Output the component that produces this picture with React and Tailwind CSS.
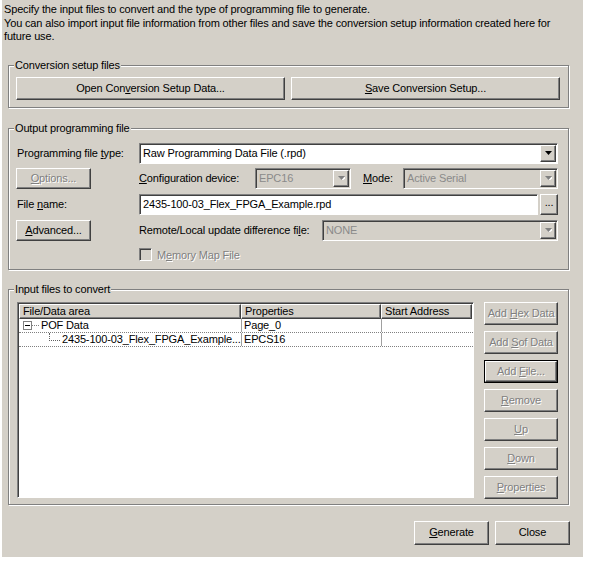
import React from 'react';

const raised =
  'border border-t-white border-l-white border-r-[#404040] border-b-[#404040] shadow-[inset_-1px_-1px_0_#808080] bg-[#d4d0c8]';
const sunken =
  'border border-t-[#808080] border-l-[#808080] border-r-white border-b-white shadow-[inset_1px_1px_0_#404040]';
const grayText = 'text-[#808080] [text-shadow:1px_1px_0_#fff]';

const Btn = ({ children, disabled, className = '' }) => (
  <div className={`${raised} flex items-center justify-center whitespace-nowrap ${disabled ? grayText : 'text-black'} ${className}`}>
    {children}
  </div>
);

const Arrow = ({ disabled }) => (
  <div className={`${raised} w-[16px] h-[17px] mr-[1px] flex items-center justify-center shrink-0`}>
    <svg width="7" height="4" viewBox="0 0 7 4">
      {disabled && <path d="M1 1h7l-3.5 4z" fill="#fff" />}
      <path d="M0 0h7l-3.5 4z" fill={disabled ? '#808080' : '#000'} />
    </svg>
  </div>
);

const Select = ({ value, disabled, className = '' }) => (
  <div className={`${sunken} h-[21px] flex items-center ${disabled ? 'bg-[#d4d0c8] text-[#8a8a8a]' : 'bg-white'} ${className}`}>
    <span className="flex-1 pl-[3px] truncate">{value}</span>
    <Arrow disabled={disabled} />
  </div>
);

const Group = ({ title, className = '', children }) => (
  <div className={`relative ml-[6px] w-[561px] border border-[#808080] shadow-[inset_1px_1px_0_#fff,1px_1px_0_#fff] ${className}`}>
    <span className="absolute -top-[8px] left-[5px] bg-[#d4d0c8] px-[1px] leading-[14px]">{title}</span>
    {children}
  </div>
);

const rightButtons = [
  ['Add ', 'H', 'ex Data'],
  ['Add ', 'S', 'of Data'],
  ['Add ', 'F', 'ile...'],
  ['', 'R', 'emove'],
  ['', 'U', 'p'],
  ['', 'D', 'own'],
  ['', 'P', 'roperties'],
];

export default function App() {
  return (
    <div className="w-[590px] h-[565px] bg-white font-['Liberation_Sans',Arial,sans-serif] text-[11px] tracking-[-0.15px] text-black">
      <div className="w-[581px] h-[557px] ml-[2px] bg-[#d4d0c8] pt-[3px]">
        <div className="pl-[2px] leading-[13.5px]">
          <p>Specify the input files to convert and the type of programming file to generate.</p>
          <p>You can also import input file information from other files and save the conversion setup information created here for</p>
          <p>future use.</p>
        </div>

        <Group title="Conversion setup files" className="mt-[21px] h-[43px] pt-[11px] pl-[7px]">
          <div className="flex gap-[6px]">
            <Btn className="w-[269px] h-[23px]">
              <span>Open Con<u>v</u>ersion Setup Data...</span>
            </Btn>
            <Btn className="w-[269px] h-[23px]">
              <span><u>S</u>ave Conversion Setup...</span>
            </Btn>
          </div>
        </Group>

        <Group title="Output programming file" className="mt-[20px] h-[142px] pt-[14px] pl-[8px]">
          <div className="flex items-center h-[21px]">
            <span className="w-[122px]">Programming file <u>t</u>ype:</span>
            <Select value="Raw Programming Data File (.rpd)" className="w-[419px]" />
          </div>
          <div className="flex items-center h-[21px] mt-[4px]">
            <div className="w-[122px]">
              <Btn disabled className="w-[75px] h-[21px] -ml-[1px]">
                <span><u>O</u>ptions...</span>
              </Btn>
            </div>
            <span className="w-[116px]"><u>C</u>onfiguration device:</span>
            <Select value="EPC16" disabled className="w-[96px]" />
            <span className="ml-[12px] w-[40px]"><u>M</u>ode:</span>
            <Select value="Active Serial" disabled className="w-[155px]" />
          </div>
          <div className="flex items-center h-[21px] mt-[5px]">
            <span className="w-[122px]">File <u>n</u>ame:</span>
            <div className={`${sunken} bg-white h-[21px] w-[399px] flex items-center pl-[3px]`}>
              2435-100-03_Flex_FPGA_Example.rpd
            </div>
            <Btn className="ml-[2px] w-[18px] h-[21px]">
              <span className="-mt-[3px]">...</span>
            </Btn>
          </div>
          <div className="flex items-center h-[21px] mt-[5px]">
            <div className="w-[122px]">
              <Btn className="w-[75px] h-[21px] -ml-[1px]">
                <span><u>A</u>dvanced...</span>
              </Btn>
            </div>
            <span className="w-[183px]">Remote/Local update difference fi<u>l</u>e:</span>
            <Select value="NONE" disabled className="w-[236px]" />
          </div>
          <div className="flex items-center mt-[6px] ml-[122px]">
            <div className={`${sunken} w-[13px] h-[13px] bg-[#d4d0c8]`} />
            <span className={`ml-[5px] ${grayText}`}>M<u>e</u>mory Map File</span>
          </div>
        </Group>

        <Group title="Input files to convert" className="mt-[19px] h-[216px] pt-[12px] pl-[8px]">
          <div className="flex">
            <div className={`${sunken} bg-white w-[457px] h-[196px] flex flex-col`}>
              <div className="flex h-[15px] mt-[1px] ml-[1px] leading-[13px]">
                <div className={`${raised} w-[222px] pl-[3px]`}>File/Data area</div>
                <div className={`${raised} w-[140px] pl-[3px]`}>Properties</div>
                <div className={`${raised} w-[91px] pl-[3px]`}>Start Address</div>
              </div>
              <div className="flex h-[14px] ml-[1px] leading-[13px] whitespace-nowrap border-b border-dotted border-[#808080]">
                <div className="w-[222px] flex items-center">
                  <div className="ml-[4px] w-[9px] h-[9px] border border-[#808080] bg-white flex items-center justify-center">
                    <div className="w-[5px] h-[1px] bg-black" />
                  </div>
                  <div className="w-[7px] border-t border-dotted border-[#808080]" />
                  <span className="ml-[2px]">POF Data</span>
                </div>
                <div className="w-[140px] border-l border-[#a0a0a0] pl-[2px]">Page_0</div>
                <div className="w-[91px] border-l border-[#a0a0a0]" />
              </div>
              <div className="flex h-[14px] ml-[1px] leading-[13px] whitespace-nowrap border-b border-dotted border-[#808080]">
                <div className="w-[222px] flex items-start overflow-hidden">
                  <div className="ml-[30px] w-[11px] h-[8px] shrink-0 border-l border-b border-dotted border-[#606060]" />
                  <span className="ml-[2px]">2435-100-03_Flex_FPGA_Example...</span>
                </div>
                <div className="w-[140px] border-l border-[#a0a0a0] pl-[2px]">EPCS16</div>
                <div className="w-[91px] border-l border-[#a0a0a0]" />
              </div>
            </div>
            <div className="ml-[10px] flex flex-col gap-[6px]">
              {rightButtons.map(([a, k, b], i) =>
                i === 2 ? (
                  <div key={i} className="border border-black w-[74px] h-[23px]">
                    <Btn disabled className="w-full h-full">
                      <span>{a}<u>{k}</u>{b}</span>
                    </Btn>
                  </div>
                ) : (
                  <Btn key={i} disabled className="w-[74px] h-[23px]">
                    <span>{a}<u>{k}</u>{b}</span>
                  </Btn>
                )
              )}
            </div>
          </div>
        </Group>

        <div className="flex justify-end gap-[6px] mt-[16px] pr-[13px]">
          <Btn className="w-[75px] h-[24px]">
            <span><u>G</u>enerate</span>
          </Btn>
          <Btn className="w-[75px] h-[24px]">
            <span>Close</span>
          </Btn>
        </div>
      </div>
    </div>
  );
}
